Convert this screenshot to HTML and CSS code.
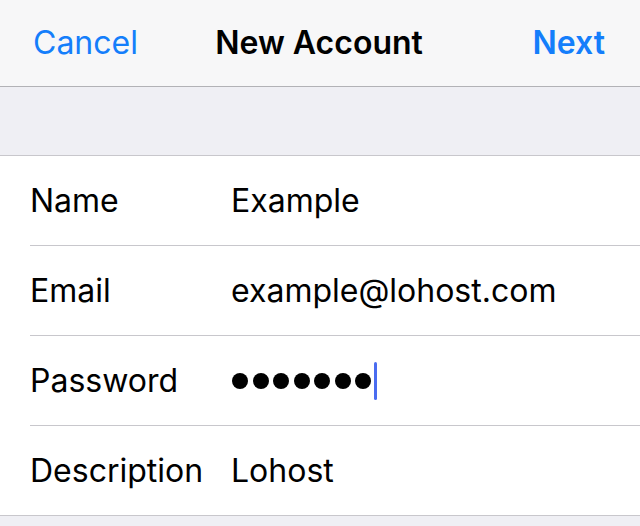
FILE: index.html
```html
<!DOCTYPE html>
<html>
<head>
<meta charset="utf-8">
<link rel="stylesheet" href="styles.css">
</head>
<body>
  <header class="nav">
    <span class="nav-btn nav-left">Cancel</span>
    <span class="nav-title">New Account</span>
    <span class="nav-btn nav-right">Next</span>
  </header>
  <div class="band"></div>
  <section class="list">
    <div class="row">
      <span class="label">Name</span>
      <span class="value">Example</span>
    </div>
    <div class="row">
      <span class="label">Email</span>
      <span class="value">example@lohost.com</span>
    </div>
    <div class="row">
      <span class="label">Password</span>
      <span class="value dots">
        <i class="dot"></i><i class="dot"></i><i class="dot"></i><i class="dot"></i><i class="dot"></i><i class="dot"></i><i class="dot"></i><i class="cursor"></i>
      </span>
    </div>
    <div class="row">
      <span class="label">Description</span>
      <span class="value">Lohost</span>
    </div>
  </section>
</body>
</html>
```
FILE: styles.css
```css
html, body {
  margin: 0;
  padding: 0;
}
body {
  background: #efeff4;
  font-family: Inter, "Liberation Sans", sans-serif;
  color: #000;
  width: 640px;
  height: 526px;
  overflow: hidden;
}
.nav {
  height: 86px;
  background: #f7f7f8;
  border-bottom: 1px solid #b2b2b6;
  display: grid;
  grid-template-columns: 1fr auto 1fr;
  align-items: center;
  padding: 0 35px 2px 33px;
  box-sizing: border-box;
  height: 87px;
  font-size: 32px;
}
.nav-btn {
  color: #147efb;
}
.nav-left {
  justify-self: start;
}
.nav-right {
  justify-self: end;
  font-weight: 600;
}
.nav-title {
  font-weight: 600;
}
.band {
  height: 68px;
}
.list {
  background: #fff;
  border-top: 1px solid #c8c7cc;
  border-bottom: 1px solid #c8c7cc;
}
.row {
  margin-left: 30px;
  height: 89px;
  border-bottom: 1px solid #c8c7cc;
  display: flex;
  align-items: center;
  font-size: 32px;
}
.row:last-child {
  border-bottom: none;
}
.label {
  width: 201px;
  flex: none;
}
.dots {
  display: flex;
  align-items: center;
  gap: 4.5px;
  height: 40px;
  margin-left: 1px;
}
.dot {
  width: 16px;
  height: 16px;
  border-radius: 50%;
  background: #000;
  display: block;
  flex: none;
}
.cursor {
  display: block;
  flex: none;
  width: 3px;
  height: 38px;
  border-radius: 2px;
  background: #4a6cf0;
  margin-left: -2px;
}
```
